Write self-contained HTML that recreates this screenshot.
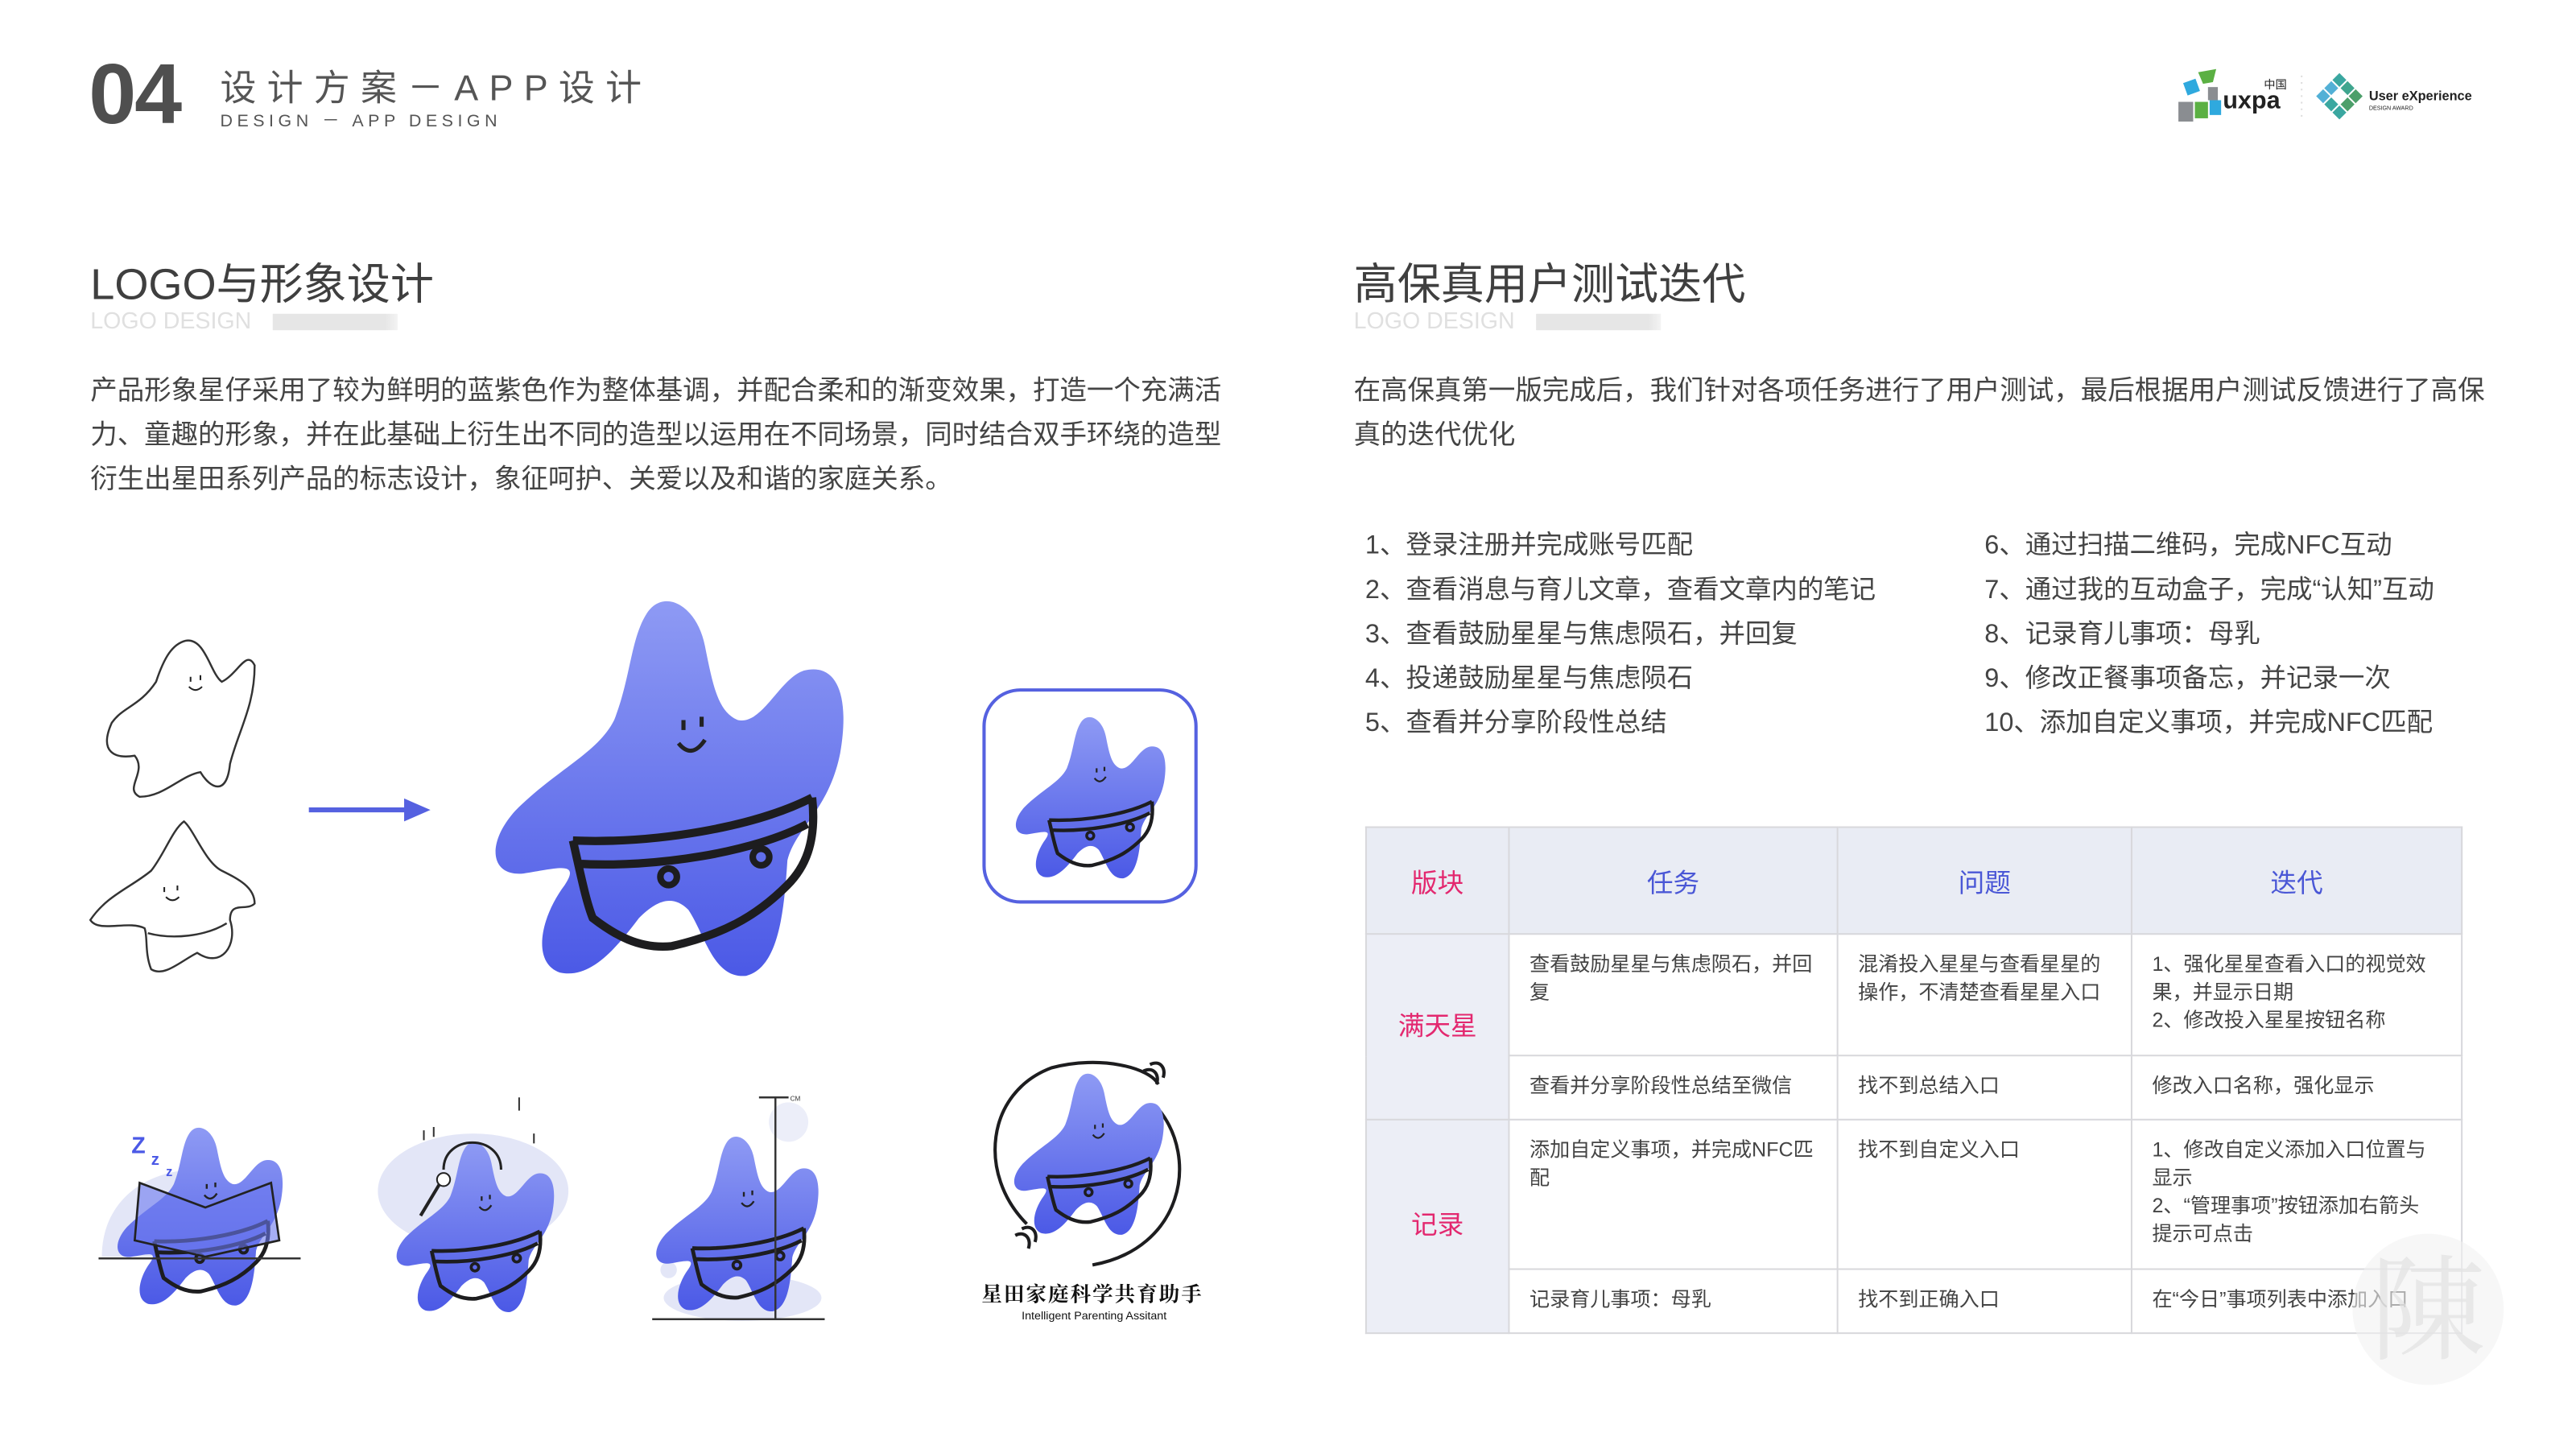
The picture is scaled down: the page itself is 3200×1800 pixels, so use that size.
<!DOCTYPE html>
<html><head><meta charset="utf-8">
<style>
html,body{margin:0;padding:0;background:#fff;}
body{width:3200px;height:1800px;overflow:hidden;position:relative;}
#s{position:absolute;left:0;top:0;width:1568px;height:882px;transform:scale(2.0408);transform-origin:0 0;font-family:"Liberation Sans","Noto Sans CJK SC",sans-serif;color:#444;}
.a{position:absolute;white-space:nowrap;}
.h2{font-size:26.5px;color:#3f3f3f;}
.sub{font-size:14px;color:#e0e0e0;}
.bar{position:absolute;height:10px;background:linear-gradient(90deg,#e6e6e6 90%,#f3f3f3);}
.p{font-size:16.4px;line-height:27px;color:#444;white-space:normal;}
.li{font-size:15.9px;color:#444;line-height:27px;}
table{position:absolute;left:831px;top:503px;width:667px;border-collapse:collapse;table-layout:fixed;font-size:12.3px;color:#444;}
td{border:1px solid #d8d8dc;vertical-align:top;padding:10px 12px;line-height:17px;}
td.r{padding-right:16px;}
th{border:1px solid #d8d8dc;background:#e9ecf4;color:#4a57d6;font-weight:normal;font-size:16px;height:62px;}
td.k{background:#eceef6;color:#e3286f;font-size:16px;text-align:center;vertical-align:middle;padding:0;}
</style></head><body><div id="s">
<svg width="0" height="0" style="position:absolute">
<defs>
<linearGradient id="g" x1="0" y1="0" x2="0" y2="1"><stop offset="0" stop-color="#8e9af4"/><stop offset="1" stop-color="#4b59e6"/></linearGradient>
<symbol id="st" viewBox="0 0 220 235">
<path fill="url(#g)" d="M95 10 C105 -5 125 5 130 30 C135 55 138 70 150 75 C165 78 175 50 190 45 C210 40 218 60 212 95 C205 130 185 140 180 160 C178 190 175 225 155 230 C135 232 130 205 120 190 C110 180 100 185 90 195 C75 215 60 232 42 228 C25 222 30 195 45 175 C55 160 40 165 20 168 C0 170 -3 150 15 130 C40 105 65 95 75 75 C85 50 85 25 95 10Z"/>
<path fill="none" stroke="#1d1d1f" stroke-width="5" d="M50 148 C100 150 160 140 195 122 M52 162 C100 165 160 155 192 138 M195 122 C198 150 190 165 180 175 C160 195 140 205 110 212 C90 214 75 205 62 195 C58 185 55 170 50 148"/>
<circle cx="108" cy="170" r="5" fill="none" stroke="#1d1d1f" stroke-width="4"/><circle cx="164" cy="158" r="5" fill="none" stroke="#1d1d1f" stroke-width="4"/>
<path fill="none" stroke="#222" stroke-width="2.5" d="M117 75 v6 M128 73 v6 M114 89 q8 10 16 -2"/>
</symbol>
</defs></svg>

<div class="a" style="left:54px;top:28px;font-size:52px;font-weight:bold;color:#4f4f4f;letter-spacing:-1px;">04</div>
<div class="a" style="left:134px;top:36px;font-size:22px;color:#555;letter-spacing:6.5px;">设计方案－APP设计</div>
<div class="a" style="left:134px;top:66px;font-size:10.5px;color:#555;letter-spacing:2.7px;">DESIGN － APP DESIGN</div>

<svg class="a" style="left:1322px;top:40px" width="185" height="38" viewBox="0 0 185 38">
<rect x="4" y="22" width="9" height="12" fill="#8a8d91"/><rect x="14" y="22" width="8" height="10" fill="#5bb043"/><rect x="23" y="21" width="7" height="9" fill="#2fa9de"/>
<rect x="8" y="9" width="8" height="8" fill="#2fa9de" transform="rotate(-20 12 13)"/><rect x="22" y="13" width="6" height="8" fill="#8a8d91"/><path d="M16 4 L27 2 L25 10 L19 11Z" fill="#5bb043"/>
<text x="31" y="26" font-family="Liberation Sans" font-weight="bold" font-size="15" fill="#222">uxpa</text>
<text x="56" y="14" font-family="Noto Sans CJK SC" font-size="7" fill="#222">中国</text>
<line x1="79" y1="6" x2="79" y2="32" stroke="#ddd" stroke-dasharray="1 3"/>
<g transform="translate(102 20) rotate(45)"><rect x="-11" y="-11" width="6" height="6" fill="#3aa7a0"/><rect x="-4" y="-11" width="6" height="6" fill="#3fa58e"/><rect x="3" y="-11" width="6" height="6" fill="#4c9f6a"/><rect x="-11" y="-4" width="6" height="6" fill="#52b0d6"/><rect x="3" y="-4" width="6" height="6" fill="#4c9f6a"/><rect x="-11" y="3" width="6" height="6" fill="#52b0d6"/><rect x="-4" y="3" width="6" height="6" fill="#3aa7a0"/><rect x="3" y="3" width="6" height="6" fill="#3aa7a0"/></g>
<text x="120" y="21" font-family="Liberation Sans" font-weight="bold" font-size="8" fill="#222">User eXperience</text>
<text x="120" y="27" font-family="Liberation Sans" font-size="3.5" fill="#222">DESIGN  AWARD</text>
</svg>

<div class="a h2" style="left:55px;top:151px;">LOGO与形象设计</div>
<div class="a sub" style="left:55px;top:187px;">LOGO DESIGN</div>
<div class="bar" style="left:166px;top:191px;width:76px;"></div>
<div class="a p" style="left:55px;top:225px;width:696px;">产品形象星仔采用了较为鲜明的蓝紫色作为整体基调，并配合柔和的渐变效果，打造一个充满活力、童趣的形象，并在此基础上衍生出不同的造型以运用在不同场景，同时结合双手环绕的造型衍生出星田系列产品的标志设计，象征呵护、关爱以及和谐的家庭关系。</div>

<div class="a h2" style="left:824px;top:151px;">高保真用户测试迭代</div>
<div class="a sub" style="left:824px;top:187px;">LOGO DESIGN</div>
<div class="bar" style="left:935px;top:191px;width:76px;"></div>
<div class="a p" style="left:824px;top:225px;width:692px;">在高保真第一版完成后，我们针对各项任务进行了用户测试，最后根据用户测试反馈进行了高保真的迭代优化</div>

<div class="a li" style="left:831px;top:319px;">1、登录注册并完成账号匹配<br>2、查看消息与育儿文章，查看文章内的笔记<br>3、查看鼓励星星与焦虑陨石，并回复<br>4、投递鼓励星星与焦虑陨石<br>5、查看并分享阶段性总结</div>
<div class="a li" style="left:1208px;top:319px;">6、通过扫描二维码，完成NFC互动<br>7、通过我的互动盒子，完成“认知”互动<br>8、记录育儿事项：母乳<br>9、修改正餐事项备忘，并记录一次<br>10、添加自定义事项，并完成NFC匹配</div>

<table>
<colgroup><col style="width:87px"><col style="width:200px"><col style="width:179px"><col style="width:201px"></colgroup>
<tr><th style="color:#e3286f">版块</th><th>任务</th><th>问题</th><th>迭代</th></tr>
<tr style="height:74px"><td class="k" rowspan="2">满天星</td><td>查看鼓励星星与焦虑陨石，并回复</td><td>混淆投入星星与查看星星的操作，不清楚查看星星入口</td><td class="r">1、强化星星查看入口的视觉效果，并显示日期<br>2、修改投入星星按钮名称</td></tr>
<tr style="height:39px"><td>查看并分享阶段性总结至微信</td><td>找不到总结入口</td><td class="r">修改入口名称，强化显示</td></tr>
<tr style="height:91px"><td class="k" rowspan="2">记录</td><td>添加自定义事项，并完成NFC匹配</td><td>找不到自定义入口</td><td class="r">1、修改自定义添加入口位置与显示<br>2、“管理事项”按钮添加右箭头提示可点击</td></tr>
<tr style="height:39px"><td>记录育儿事项：母乳</td><td>找不到正确入口</td><td class="r">在“今日”事项列表中添加入口</td></tr>
</table>

<svg class="a" style="left:0;top:0" width="1568" height="882" viewBox="0 0 1568 882">
<path fill="none" stroke="#333" stroke-width="1.2" d="M113 390 C125 388 128 410 135 415 C145 410 150 395 155 405 C155 430 145 445 140 465 C138 485 128 480 122 470 C110 472 100 485 85 485 C75 480 90 470 82 460 C70 462 60 458 68 440 C75 430 85 430 95 415 C100 400 105 392 113 390Z"/>
<path fill="none" stroke="#222" stroke-width="1" d="M116 412 v3 M122 411 v3 M115 418 q4 4 8 0"/>
<path fill="none" stroke="#333" stroke-width="1.2" d="M112 500 C118 505 125 525 135 530 C145 535 155 540 155 550 C150 555 140 548 140 560 C145 575 135 590 120 580 C110 585 100 595 92 590 C88 580 90 570 88 565 C78 560 60 568 55 560 C65 545 80 540 92 530 C100 520 105 505 112 500Z M90 568 C105 572 125 570 138 562"/>
<path fill="none" stroke="#222" stroke-width="1" d="M100 540 v3 M108 539 v3 M101 546 q4 4 8 0"/>
<path d="M188 493 H250" stroke="#5561e0" stroke-width="3"/><path d="M246 486 L262 493 L246 500Z" fill="#5561e0"/>
<use href="#st" x="298" y="363" width="222" height="236"/>
<rect x="599" y="420" width="129" height="129" rx="22" fill="#fff" stroke="#5561e0" stroke-width="2"/>
<use href="#st" x="617" y="435" width="95" height="102"/>
<path d="M62 765 C62 730 90 712 120 712 L120 765Z" fill="#e3e6f7"/>
<use href="#st" x="65" y="685" width="115" height="112"/>
<path d="M85 720 L125 735 L165 720 L170 755 L125 765 L82 755Z" fill="#6a78ee" fill-opacity=".6" stroke="#222" stroke-width="1.3"/>
<line x1="60" y1="766" x2="183" y2="766" stroke="#333" stroke-width="1.2"/>
<text x="80" y="702" font-size="14" font-weight="bold" fill="#4b59e6">Z</text><text x="92" y="709" font-size="10" font-weight="bold" fill="#4b59e6">z</text><text x="101" y="716" font-size="8" font-weight="bold" fill="#4b59e6">z</text>
<ellipse cx="288" cy="725" rx="58" ry="35" fill="#e3e6f7"/>
<use href="#st" x="240" y="690" width="100" height="115"/>
<path d="M270 712 C270 690 305 690 305 712" fill="none" stroke="#222" stroke-width="1.5"/>
<line x1="256" y1="740" x2="268" y2="720" stroke="#222" stroke-width="2"/><circle cx="270" cy="718" r="4" fill="#fff" stroke="#222"/>
<path d="M316 668 v8 M258 688 v6 M264 686 v6 M325 690 v6" stroke="#333" stroke-width="1"/>
<circle cx="480" cy="683" r="12" fill="#eceef9"/><ellipse cx="452" cy="790" rx="48" ry="14" fill="#e3e6f7"/><circle cx="407" cy="773" r="5" fill="#e3e6f7"/>
<use href="#st" x="398" y="688" width="103" height="115"/>
<path d="M472 668 V803 M462 668 H480" stroke="#333" stroke-width="1.2"/><text x="481" y="670" font-size="4" fill="#333">CM</text>
<line x1="397" y1="803" x2="502" y2="803" stroke="#333" stroke-width="1.2"/>
<path d="M625 745 C595 715 600 665 640 650 C670 642 700 650 705 660 M705 675 C730 705 720 760 665 770" fill="none" stroke="#1d1d1f" stroke-width="2"/>
<path d="M700 648 c6 -3 10 2 8 8 M696 652 c6 -3 10 2 8 8 M618 752 c6 -3 10 2 8 8 M622 748 c6 -3 10 2 8 8" fill="none" stroke="#1d1d1f" stroke-width="2"/>
<use href="#st" x="616" y="652" width="95" height="102"/>
<text x="665" y="792" text-anchor="middle" font-family="Noto Serif CJK SC,serif" font-weight="bold" font-size="12.5" fill="#111" letter-spacing="1">星田家庭科学共育助手</text>
<text x="666" y="803" text-anchor="middle" font-family="Liberation Sans" font-size="7" fill="#111">Intelligent Parenting Assitant</text>
<circle cx="1478" cy="797" r="46" fill="#f2f2f2" fill-opacity=".6"/>
<text x="1478" y="822" text-anchor="middle" font-family="Noto Serif CJK SC,serif" font-size="70" fill="#e2e2e2" fill-opacity=".7">陳</text>
</svg>
</div></body></html>
